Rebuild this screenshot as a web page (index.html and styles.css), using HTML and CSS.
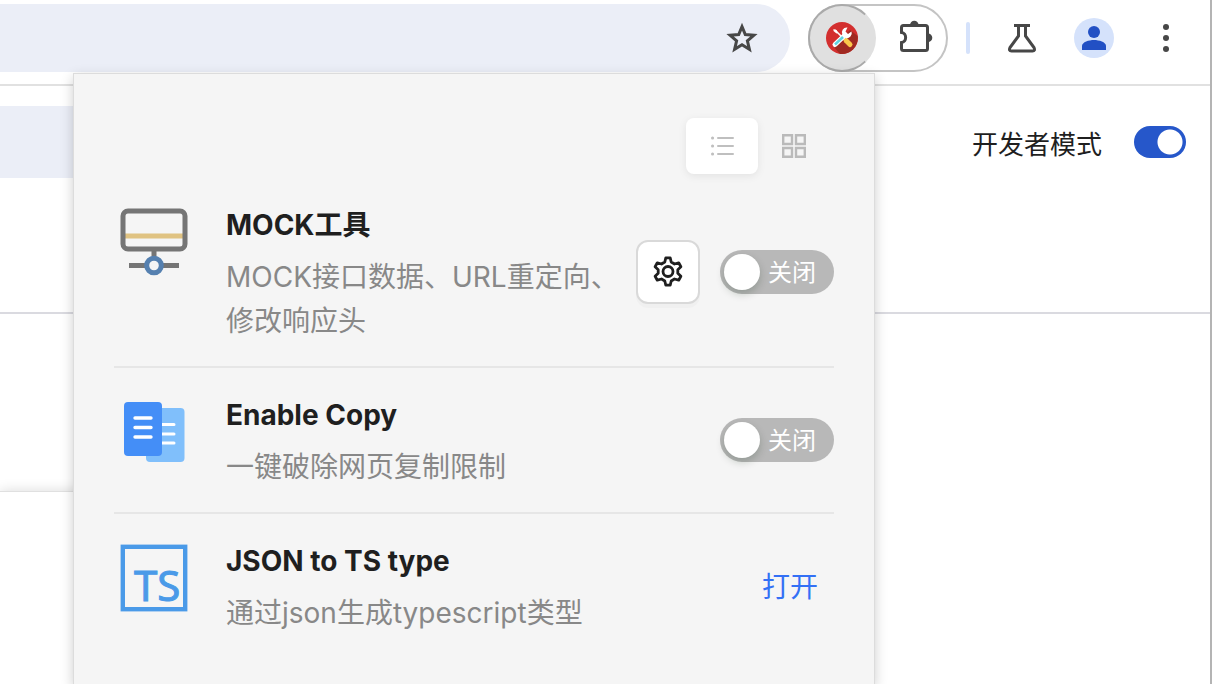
FILE: index.html
```html
<!DOCTYPE html>
<html lang="zh-CN">
<head>
<meta charset="utf-8">
<meta name="viewport" content="width=device-width, initial-scale=1">
<title>扩展程序</title>
<link rel="stylesheet" href="styles.css">
</head>
<body>
<div class="window">
  <header class="toolbar">
    <div class="omnibox">
      <button class="icon-button" type="button" aria-label="收藏">
        <svg width="32" height="32" viewBox="0 0 32 32" fill="none" stroke="#474747" stroke-width="3"><path d="M16 4.600l3.300 8 8.600.700-6.500 5.600 2 8.400-7.400-4.500-7.400 4.500 2-8.400-6.500-5.600 8.600-.700z"/></svg>
      </button>
    </div>
    <div class="extensions">
      <button class="ext-active" type="button" aria-label="工具箱">
        <svg width="32" height="32" viewBox="0 0 32 32">
          <circle cx="16" cy="16" r="16" fill="#d32f2f"/>
          <path d="M24 8L31.600 14A16 16 0 0 1 14 31.900L7 24z" fill="#a02a22"/>
          <path d="M9 8l10 10" stroke="#fff" stroke-width="1.600"/>
          <path d="M7.500 7l3 1 1.500 3-1.500.500-3-2.500z" fill="#fff"/>
          <path d="M20 18.500l4 4" stroke="#fbc84a" stroke-width="5" stroke-linecap="round"/>
          <path d="M21.500 5.500A5 5 0 0 0 16.500 13L19.500 16A5 5 0 0 0 25.500 9.500L22 12 19.500 9.500z" fill="#fff"/>
          <path d="M17.500 14.500L9 22.500" stroke="#fff" stroke-width="5" stroke-linecap="round"/>
          <path d="M17 15L9 22.500" stroke="#5fd3e0" stroke-width="2.500"/>
        </svg>
      </button>
      <button class="icon-button" type="button" aria-label="扩展程序">
        <svg width="40" height="40" viewBox="0 0 40 40"><path d="M8.500 7.500H29.500Q31.500 7.500 31.500 9.500V30.500Q31.500 32.500 29.500 32.500H7.500Q5.500 32.500 5.500 30.500V24.500C11 24 11 15 5.500 14.500V9.500Q5.500 7.500 7.500 7.500Z" fill="none" stroke="#474747" stroke-width="3"/><path d="M14 7a4.300 4.300 0 0 1 8.600 0zM32 15.500a4.300 4.300 0 0 1 0 8.600z" fill="#474747"/></svg>
      </button>
    </div>
    <span class="divider"></span>
    <button class="icon-button" type="button" aria-label="实验">
      <svg width="32" height="32" viewBox="0 0 32 32" fill="none" stroke="#474747" stroke-width="3"><path d="M8 3.500h16M12.500 3.500v10.500L4 25.500Q2.500 29 5.500 29H26.500Q29.500 29 28 25.500L19.500 14V3.500"/></svg>
    </button>
    <button class="avatar" type="button" aria-label="个人资料">
      <svg width="40" height="40" viewBox="0 0 40 40" fill="#2250c4"><circle cx="20" cy="14" r="6"/><path d="M8 32v-4c0-4 7-6 12-6s12 2 12 6v4z"/></svg>
    </button>
    <button class="icon-button" type="button" aria-label="更多">
      <svg width="32" height="32" viewBox="0 0 32 32" fill="#474747"><circle cx="16" cy="5" r="3"/><circle cx="16" cy="16" r="3"/><circle cx="16" cy="27" r="3"/></svg>
    </button>
  </header>

  <main class="page">
    <section class="page-head">
      <div class="search"></div>
      <label class="dev-mode">开发者模式<input class="dev-switch" type="checkbox" role="switch" checked></label>
    </section>
    <section class="card-area"><div class="card"></div></section>
  </main>
</div>

<div class="popup">
  <div class="views">
    <button class="view view-on" type="button" aria-label="列表">
      <svg width="28" height="28" viewBox="0 0 28 28" stroke="#bfbfbf" stroke-width="2" stroke-linecap="round"><path d="M10 6h15M10 14h15M10 22h15"/><path d="M4.500 6h.1M4.500 14h.1M4.500 22h.1" stroke-width="3"/></svg>
    </button>
    <button class="view" type="button" aria-label="网格">
      <svg width="28" height="28" viewBox="0 0 28 28" fill="none" stroke="#bababa" stroke-width="2.400"><path d="M3.200 3.200h8.800v8.800H3.200zM16 3.200h8.800v8.800h-8.800zM3.200 16h8.800v8.800H3.200zM16 16h8.800v8.800h-8.800z"/></svg>
    </button>
  </div>
  <ul class="tools">
    <li class="tool">
      <svg class="logo" viewBox="0 0 80 80" fill="none">
        <path d="M40 48v8M15 63.500h50" stroke="#757575" stroke-width="5"/>
        <path d="M11 34h58" stroke="#e0c382" stroke-width="5"/>
        <rect x="9" y="9" width="62" height="38" rx="5" stroke="#757575" stroke-width="5"/>
        <circle cx="40" cy="63.500" r="7.300" fill="#f5f5f5" stroke="#5580b0" stroke-width="5"/>
      </svg>
      <div class="info">
        <h2 class="name">MOCK工具</h2>
        <p class="desc">MOCK接口数据、URL重定向、修改响应头</p>
      </div>
      <div class="actions">
        <button class="settings" type="button" aria-label="设置">
          <svg width="32" height="32" viewBox="0 0 32 32" fill="none" stroke="#1f1f1f" stroke-width="2.800" stroke-linejoin="round"><circle cx="16" cy="15.500" r="5"/><path d="M13.800 1.800h4.400l1 4.200 3.300 2 4.200-1.200 2.200 3.900-3.100 3v3.600l3.100 3-2.200 3.900-4.200-1.200-3.300 2-1 4.200h-4.400l-1-4.200-3.300-2-4.200 1.200-2.200-3.900 3.100-3v-3.600l-3.100-3 2.200-3.900 4.200 1.200 3.300-2z"/></svg>
        </button>
        <button class="switch" type="button" role="switch" aria-checked="false"><span class="knob"></span><span class="switch-text">关闭</span></button>
      </div>
    </li>
    <li class="tool">
      <svg class="logo" viewBox="0 0 80 80">
        <rect x="32" y="16" width="38.500" height="54" rx="4" fill="#80bffb"/>
        <path d="M46 32.500h14M46 42h14M46 51h14" stroke="#fff" stroke-width="3" stroke-linecap="round"/>
        <rect x="10" y="10" width="38" height="54" rx="4" fill="#448ef7"/>
        <path d="M21 26h16M21 35.500h16M21 45h16" stroke="#fff" stroke-width="3.400" stroke-linecap="round"/>
      </svg>
      <div class="info">
        <h2 class="name">Enable Copy</h2>
        <p class="desc">一键破除网页复制限制</p>
      </div>
      <div class="actions">
        <button class="switch" type="button" role="switch" aria-checked="false"><span class="knob"></span><span class="switch-text">关闭</span></button>
      </div>
    </li>
    <li class="tool">
      <svg class="logo" viewBox="0 0 80 80">
        <rect x="8.800" y="8.800" width="62.400" height="62.400" fill="none" stroke="#4a9ae8" stroke-width="4.400"/>
        <text class="logo-text" x="20" y="63">TS</text>
      </svg>
      <div class="info">
        <h2 class="name">JSON to TS type</h2>
        <p class="desc">通过json生成typescript类型</p>
      </div>
      <div class="actions">
        <button class="open" type="button">打开</button>
      </div>
    </li>
  </ul>
</div>
</body>
</html>
```
FILE: styles.css
```css
* {
  box-sizing: border-box;
}

body {
  margin: 0;
  height: 100vh;
  overflow: hidden;
  position: relative;
  background: #fff;
  color: #1f1f1f;
  font-family: Inter, "Noto Sans CJK SC", sans-serif;
}

button {
  display: flex;
  align-items: center;
  justify-content: center;
  padding: 0;
  border: 0;
  background: none;
  color: inherit;
  font-family: inherit;
}

.window {
  display: flex;
  flex-direction: column;
  height: 100%;
  border-right: 2px solid #b4b4b4;
}

.toolbar {
  display: flex;
  align-items: center;
  height: 86px;
  padding: 4px 28px 12px 0;
  border-bottom: 2px solid #e1e1e1;
}

.omnibox {
  flex: 1;
  display: flex;
  align-items: center;
  justify-content: flex-end;
  height: 68px;
  padding-right: 32px;
  border-radius: 0 34px 34px 0;
  background: #ebeef7;
}

.extensions {
  display: flex;
  align-items: center;
  justify-content: space-between;
  width: 140px;
  height: 68px;
  margin: 0 18px;
  padding-right: 10px;
  border: 2px solid #c4c4c4;
  border-radius: 34px;
}

.ext-active {
  width: 68px;
  height: 68px;
  margin-left: -2px;
  border: 2px solid #aaa;
  border-right-color: #e0e0e0;
  border-radius: 50%;
  background: #e0e0e0;
}

.divider {
  width: 4px;
  height: 32px;
  margin-right: 36px;
  border-radius: 2px;
  background: #d5e2fb;
}

.avatar {
  margin: 0 36px;
  border-radius: 50%;
  background: #d5e2fb;
}

.page {
  flex: 1;
  display: flex;
  flex-direction: column;
}

.page-head {
  display: flex;
  align-items: flex-start;
  justify-content: space-between;
  height: 228px;
  padding: 20px 24px 0 0;
  border-bottom: 2px solid #dadae0;
}

.search {
  width: 50%;
  height: 72px;
  background: #ebeef7;
}

.dev-mode {
  display: flex;
  align-items: center;
  gap: 32px;
  height: 72px;
  font-size: 26px;
}

.dev-switch {
  appearance: none;
  width: 52px;
  height: 32px;
  margin: 0;
  border-radius: 16px;
  background: radial-gradient(circle at 36px 16px, #fff 12px, #2657ca 13px);
}

.card-area {
  flex: 1;
  display: flex;
  padding-top: 177px;
}

.card {
  width: 50%;
  border-top: 1px solid #e0e0e0;
  box-shadow: 0 0 12px rgba(0, 0, 0, 0.15);
}

.popup {
  position: absolute;
  top: 73px;
  bottom: 0;
  left: 73px;
  width: 802px;
  padding: 44px 40px 0;
  border: 1px solid #dcdcdc;
  border-bottom: 0;
  background: #f5f5f5;
  box-shadow: 0 4px 12px rgba(0, 0, 0, 0.2);
}

.views {
  display: flex;
  justify-content: flex-end;
  padding: 0 4px 4px 0;
}

.view {
  width: 72px;
  height: 56px;
  border-radius: 8px;
}

.view-on {
  background: #fff;
  box-shadow: 0 2px 8px rgba(0, 0, 0, 0.08);
}

.tools {
  margin: 0;
  padding: 0;
  list-style: none;
}

.tool {
  display: flex;
  align-items: center;
  padding: 24px 0;
}

.tool + .tool {
  border-top: 2px solid #e6e6e6;
}

.logo {
  flex: none;
  align-self: flex-start;
  width: 80px;
  height: 80px;
  margin-right: 32px;
}

.logo-text {
  fill: #4a9ae8;
  stroke: #4a9ae8;
  stroke-width: 1px;
  font: 42px "Noto Sans", sans-serif;
}

.info {
  flex: 1;
  min-width: 0;
}

.name,
.desc {
  margin: 0;
  font-size: 28px;
  line-height: 44px;
}

.name {
  padding-top: 1px;
  margin-bottom: 8px;
  font-weight: 700;
}

.desc {
  margin-bottom: -1px;
  color: #888;
}

.actions {
  display: flex;
  align-items: center;
  gap: 20px;
  margin-left: 8px;
}

.settings {
  width: 64px;
  height: 64px;
  border: 2px solid #d9d9d9;
  border-radius: 12px;
  background: #fff;
  box-shadow: 0 4px 0 rgba(0, 0, 0, 0.02);
}

.switch {
  justify-content: flex-start;
  gap: 8px;
  width: 114px;
  height: 44px;
  padding-left: 4px;
  border-radius: 22px;
  background: #b8b8b8;
  color: #fff;
  font-size: 24px;
}

.switch-text {
  padding-bottom: 3px;
}

.knob {
  width: 36px;
  height: 36px;
  border-radius: 50%;
  background: #fff;
  box-shadow: 0 4px 8px rgba(0, 35, 11, 0.2);
}

.open {
  padding: 0 16px 2px;
  color: #3370f5;
  font-size: 28px;
}
```
